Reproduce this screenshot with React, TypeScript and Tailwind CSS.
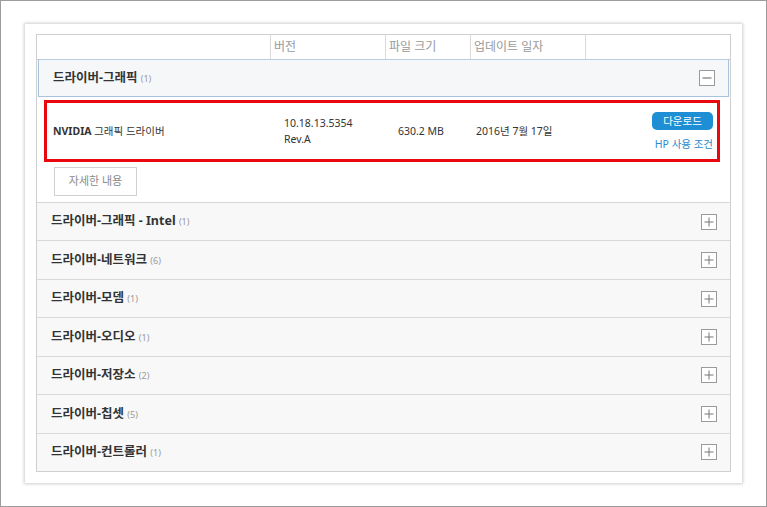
import React from "react";

const font = { fontFamily: '"Noto Sans", "Noto Sans CJK KR", sans-serif' };

function Plus() {
  return (
    <div className="w-[16px] h-[16px] border border-[#9a9a9a] bg-white flex items-center justify-center">
      <svg width="10" height="10" viewBox="0 0 10 10">
        <path d="M5 0.5V9.5M0.5 5H9.5" stroke="#777" strokeWidth="1" />
      </svg>
    </div>
  );
}

function Minus() {
  return (
    <div className="w-[16px] h-[16px] border border-[#9a9a9a] bg-white flex items-center justify-center">
      <svg width="10" height="10" viewBox="0 0 10 10">
        <path d="M0.5 5H9.5" stroke="#777" strokeWidth="1.2" />
      </svg>
    </div>
  );
}

const rows = [
  { name: "드라이버-그래픽 - Intel", count: "(1)" },
  { name: "드라이버-네트워크", count: "(6)" },
  { name: "드라이버-모뎀", count: "(1)" },
  { name: "드라이버-오디오", count: "(1)" },
  { name: "드라이버-저장소", count: "(2)" },
  { name: "드라이버-칩셋", count: "(5)" },
  { name: "드라이버-컨트롤러", count: "(1)" },
];

export default function App() {
  return (
    <div
      className="w-[767px] h-[507px] bg-white border border-[#9c9c9c] pl-[24px] pt-[23px] overflow-hidden"
      style={font}
    >
      <div className="w-[717px] h-[459px] bg-white p-[11px] pt-[10px] shadow-[0_0_3px_1px_rgba(0,0,0,0.2)]">
        <div className="w-[695px] h-[438px] border border-[#cfcfcf] flex flex-col bg-[#f8f8f8]">
          {/* header */}
          <div className="h-[25px] flex bg-white border-b border-[#b9cde2] text-[12px] text-[#999] leading-none">
            <div className="w-[233px]" />
            <div className="w-[115px] border-l border-[#d9d9d9] pl-[3px] flex items-center">버전</div>
            <div className="w-[85px] border-l border-[#d9d9d9] pl-[3px] flex items-center">파일 크기</div>
            <div className="w-[115px] border-l border-[#d9d9d9] pl-[3px] flex items-center">업데이트 일자</div>
            <div className="flex-1 border-l border-[#d9d9d9]" />
          </div>
          {/* expanded group header */}
          <div className="h-[37px] mx-[1px] flex items-center justify-between bg-[#f6f7f9] border border-t-0 border-[#a9c3de] pl-[14px] pr-[13px]">
            <div className="text-[12.5px] font-bold text-[#333] leading-none">
              드라이버-그래픽 <span className="text-[9px] font-normal text-[#999]">(1)</span>
            </div>
            <Minus />
          </div>
          {/* expanded content */}
          <div className="h-[106px] bg-white border-b border-[#d6d6d6] pt-[3px] pl-[7px] pr-[10px]">
            <div className="h-[62px] border-[3px] border-[#e8080d] flex items-center text-[10.5px] text-[#333] leading-none">
              <div className="w-[237px] pl-[6px] text-[10.5px]">
                <span className="font-bold">NVIDIA</span> 그래픽 드라이버
              </div>
              <div className="w-[114px] flex flex-col gap-[5px]">
                <span>10.18.13.5354</span>
                <span>Rev.A</span>
              </div>
              <div className="w-[78px]">630.2 MB</div>
              <div className="flex-1">2016년 7월 17일</div>
              <div className="flex flex-col items-end pr-[4px] gap-[9px]">
                <div className="w-[61px] h-[18px] rounded-[5px] bg-[#1e8fd5] text-white text-[10.5px] flex items-center justify-center">
                  다운로드
                </div>
                <div className="text-[#2a8ad0] text-[10.5px]">HP 사용 조건</div>
              </div>
            </div>
            <div className="mt-[5px] ml-[10px] w-[83px] h-[29px] border border-[#d0d0d0] flex items-center justify-center text-[11px] text-[#8a8a8a]">
              자세한 내용
            </div>
          </div>
          {rows.map((r, i) => (
            <div
              key={r.name}
              className={
                "flex-1 flex items-center justify-between pl-[14px] pr-[13px] bg-[#f8f8f8] " +
                (i < rows.length - 1 ? "border-b border-[#d9d9d9]" : "")
              }
            >
              <div className="text-[12.5px] font-bold text-[#333] leading-none">
                {r.name} <span className="text-[9px] font-normal text-[#999]">{r.count}</span>
              </div>
              <Plus />
            </div>
          ))}
        </div>
      </div>
    </div>
  );
}
